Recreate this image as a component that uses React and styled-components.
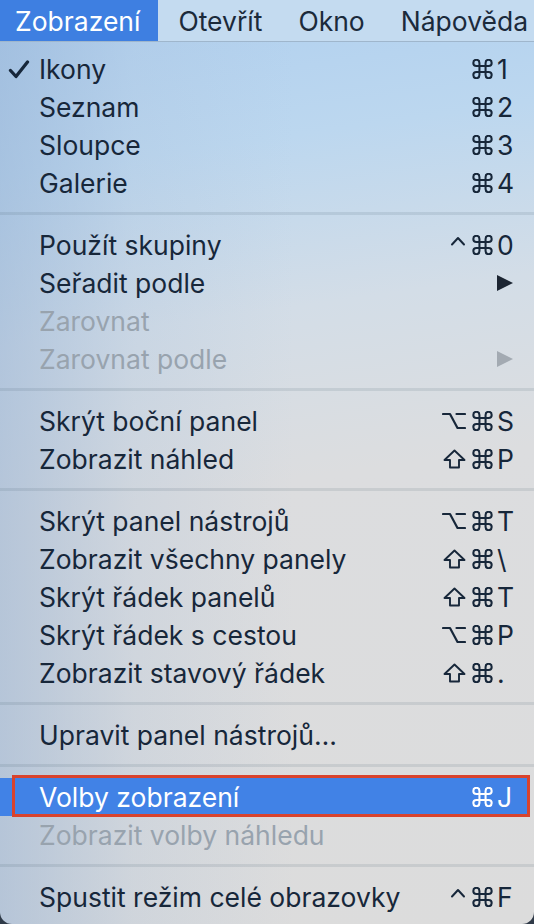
import React from 'react';
import styled, { createGlobalStyle } from 'styled-components';

const GlobalStyle = createGlobalStyle`
  html, body {
    margin: 0;
    padding: 0;
    width: 534px;
    height: 924px;
    overflow: hidden;
    background: #2f3a48;
  }
`;

const menuBar = ['Zobrazení', 'Otevřít', 'Okno', 'Nápověda'];

// mods: c = control, o = option, s = shift
const groups = [
  [
    { label: 'Ikony', key: '1', checked: true },
    { label: 'Seznam', key: '2' },
    { label: 'Sloupce', key: '3' },
    { label: 'Galerie', key: '4' },
  ],
  [
    { label: 'Použít skupiny', key: '0', mod: 'c' },
    { label: 'Seřadit podle', submenu: true },
    { label: 'Zarovnat', disabled: true },
    { label: 'Zarovnat podle', submenu: true, disabled: true },
  ],
  [
    { label: 'Skrýt boční panel', key: 'S', mod: 'o' },
    { label: 'Zobrazit náhled', key: 'P', mod: 's' },
  ],
  [
    { label: 'Skrýt panel nástrojů', key: 'T', mod: 'o' },
    { label: 'Zobrazit všechny panely', key: '\\', mod: 's' },
    { label: 'Skrýt řádek panelů', key: 'T', mod: 's' },
    { label: 'Skrýt řádek s cestou', key: 'P', mod: 'o' },
    { label: 'Zobrazit stavový řádek', key: '.', mod: 's' },
  ],
  [{ label: 'Upravit panel nástrojů…' }],
  [
    { label: 'Volby zobrazení', key: 'J', active: true },
    { label: 'Zobrazit volby náhledu', disabled: true },
  ],
  [{ label: 'Spustit režim celé obrazovky', key: 'F', mod: 'c' }],
];

const Screen = styled.div`
  width: 534px;
  height: 924px;
  display: flex;
  flex-direction: column;
  font-family: Inter, 'Noto Sans', 'DejaVu Sans', sans-serif;
  overflow: hidden;
`;

const Bar = styled.div`
  height: 41px;
  display: flex;
  align-items: stretch;
  background: #c4dbf0;
  border-bottom: 1px solid #9fb6cc;
  flex-shrink: 0;
`;

const BarItem = styled.div`
  display: flex;
  align-items: center;
  padding: 0 ${(p) => (p.first ? '18px' : '16px')} 0 ${(p) => (p.first ? '15px' : '20px')};
  font-size: 26.5px;
  white-space: nowrap;
  color: ${(p) => (p.open ? '#ffffff' : '#1b2a3b')};
  background: ${(p) => (p.open ? '#3e7fe1' : 'transparent')};
`;

const Menu = styled.div`
  flex: 1;
  padding: 8px 0;
  border-radius: 0 0 12px 12px;
  background:
    linear-gradient(90deg, rgba(150, 178, 212, 0.55) 0%, rgba(170, 192, 218, 0.25) 25%, rgba(220, 220, 220, 0) 55%),
    linear-gradient(172deg, #b2d1ef 0%, #bcd7ef 14%, #d3dde7 32%, #dcdddf 50%, #dcdcdc 100%);
`;

const Separator = styled.div`
  height: 3px;
  margin: 10px 0 11px;
  background: rgba(60, 80, 100, 0.12);
`;

const Row = styled.div`
  position: relative;
  height: 38px;
  display: flex;
  align-items: center;
  padding: 0 ${(p) => (p.active ? '14px' : '19px')} 0 39px;
  margin-right: ${(p) => (p.active ? '5px' : '0')};
  font-size: 26.5px;
  color: ${(p) => (p.disabled ? '#98a3ae' : p.active ? '#ffffff' : '#17273a')};
  background: ${(p) => (p.active ? '#4182e6' : 'transparent')};
`;

const Check = styled.svg`
  position: absolute;
  left: 8px;
  top: 10px;
  width: 22px;
  height: 19px;
`;

const Label = styled.span`
  flex: 1;
  white-space: nowrap;
`;

const Keys = styled.span`
  display: flex;
  align-items: center;
`;

const Icon = styled.svg`
  display: block;
  fill: none;
  stroke: currentColor;
  stroke-width: ${(p) => p.sw || 2};
  stroke-linecap: round;
  stroke-linejoin: round;
  margin-right: ${(p) => p.mr || 0}px;
`;

const Key = styled.span`
  width: 18px;
  white-space: nowrap;
`;

const Arrow = styled.svg`
  width: 18px;
  height: 18px;
  margin-right: 1px;
`;

const Callout = styled.div`
  position: absolute;
  left: 12px;
  right: -1px;
  top: -3px;
  bottom: -1px;
  border: 3px solid #d9432d;
  pointer-events: none;
`;

const Cmd = () => (
  <Icon width="21" height="20" viewBox="2.2 2.2 19.6 19.6" sw={2} mr={4}>
    <path d="M15 6v12a3 3 0 1 0 3-3H6a3 3 0 1 0 3 3V6a3 3 0 1 0-3 3h12a3 3 0 1 0-3-3" />
  </Icon>
);

const Mod = ({ type }) => {
  if (type === 'c') {
    return (
      <Icon width="16" height="20" viewBox="0 0 16 20" sw={2} mr={6}>
        <path d="M2 9.5 L8 3 L14 9.5" />
      </Icon>
    );
  }
  if (type === 'o') {
    return (
      <Icon width="24" height="18" viewBox="0 0 24 18" sw={2.2} mr={6}>
        <path d="M1 2 H8 L15.5 16 H23" />
        <path d="M14.5 2 H23" />
      </Icon>
    );
  }
  return (
    <Icon width="23" height="20" viewBox="0 0 23 20" sw={1.9} mr={6}>
      <path d="M11.5 1.5 L21.5 11 H16 V18.5 H7 V11 H1.5 Z" />
    </Icon>
  );
};

const MenuRow = ({ item }) => (
  <Row disabled={item.disabled} active={item.active}>
    {item.checked && (
      <Check viewBox="0 0 22 19">
        <path d="M2.5 10.5 L8 16.5 L19.5 2" fill="none" stroke="#17273a" strokeWidth="3.3" strokeLinecap="round" strokeLinejoin="round" />
      </Check>
    )}
    <Label>{item.label}</Label>
    {item.key && (
      <Keys>
        {item.mod && <Mod type={item.mod} />}
        <Cmd />
        <Key>{item.key}</Key>
      </Keys>
    )}
    {item.submenu && (
      <Arrow viewBox="0 0 18 18">
        <path d="M1 1 L17 9 L1 17 Z" fill={item.disabled ? '#a3aab2' : '#1c2532'} />
      </Arrow>
    )}
    {item.active && <Callout />}
  </Row>
);

const App = () => (
  <Screen>
    <GlobalStyle />
    <Bar>
      {menuBar.map((name, i) => (
        <BarItem key={name} first={i === 0} open={i === 0}>
          {name}
        </BarItem>
      ))}
    </Bar>
    <Menu>
      {groups.map((group, gi) => (
        <React.Fragment key={gi}>
          {gi > 0 && <Separator />}
          {group.map((item) => (
            <MenuRow key={item.label} item={item} />
          ))}
        </React.Fragment>
      ))}
    </Menu>
  </Screen>
);

export default App;
